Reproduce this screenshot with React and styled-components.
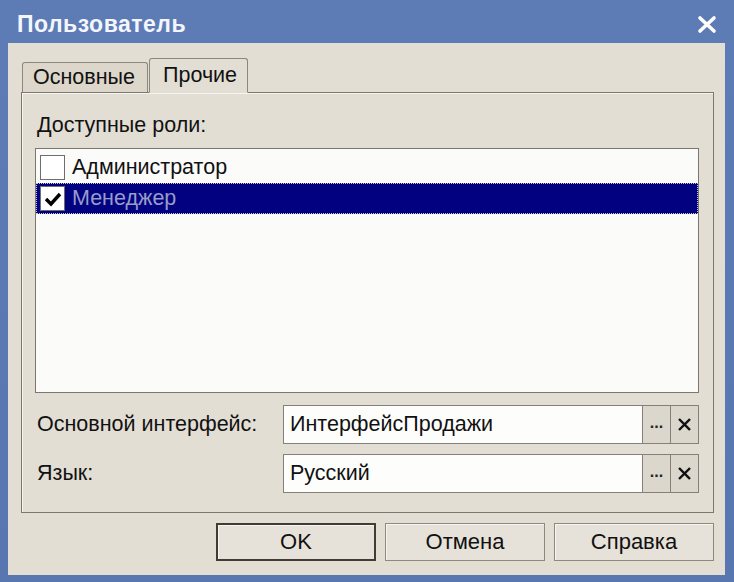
import React from "react";
import styled, { createGlobalStyle } from "styled-components";

const Global = createGlobalStyle`
  html, body { margin: 0; padding: 0; background: #5a79b2; }
  body { font-family: "Liberation Sans", Arial, sans-serif; }
  * { box-sizing: border-box; }
`;

const Window = styled.div`
  width: 734px;
  height: 582px;
  background: linear-gradient(#5d7cb6, #5877b0);
  display: flex;
  flex-direction: column;
  overflow: hidden;
`;

const TitleBar = styled.div`
  height: 43px;
  flex: none;
  display: flex;
  align-items: center;
  justify-content: space-between;
  padding: 6px 17px 0 17px;
`;

const Title = styled.div`
  color: #f4f6fb;
  font-weight: bold;
  font-size: 23px;
  letter-spacing: 0.5px;
`;

const CloseIcon = styled.svg`
  width: 20px;
  height: 19px;
  margin-top: 0px;
`;

const Body = styled.div`
  flex: 1;
  margin: 0 9px 7px 8px;
  background: #e3ded4;
  padding: 15px 11px 0 13px;
  display: flex;
  flex-direction: column;
`;

const TabRow = styled.div`
  display: flex;
  align-items: flex-end;
  height: 35px;
  padding-left: 1px;
  position: relative;
  z-index: 1;
  margin-bottom: -1px;
`;

const Tab = styled.div`
  height: ${(p) => (p.$active ? "35px" : "30px")};
  padding: 0 ${(p) => (p.$active ? "13px" : "10px")};
  width: ${(p) => p.$w}px;
  display: flex;
  align-items: center;
  font-size: 21.5px;
  color: #111;
  background: ${(p) => (p.$active ? "#e3ded4" : "#dcd6cb")};
  border: 1px solid #8b877d;
  border-bottom: ${(p) => (p.$active ? "1px solid #e3ded4" : "none")};
  border-radius: 3px 3px 0 0;
  margin-left: ${(p) => (p.$active ? "1px" : "0")};
  margin-bottom: ${(p) => (p.$active ? "0" : "1px")};
`;

const Panel = styled.div`
  height: 421px;
  border: 1px solid #7c786f;
  box-shadow: inset 1px 1px 0 #f6f4ef;
  padding: 20px 14px 0 13px;
  display: flex;
  flex-direction: column;
`;

const Label = styled.div`
  font-size: 21.5px;
  color: #111;
  height: 24px;
  display: flex;
  align-items: center;
  padding-left: 2px;
  width: ${(p) => (p.$w ? p.$w + "px" : "auto")};
  flex: none;
`;

const ListBox = styled.div`
  margin-top: 11px;
  height: 245px;
  background: #fbfbfa;
  border: 1px solid #7b776e;
  padding-top: 2px;
  display: flex;
  flex-direction: column;
`;

const ListRow = styled.div`
  height: ${(p) => p.$h}px;
  display: flex;
  align-items: center;
  padding-left: 4px;
  gap: 7px;
  font-size: 21.5px;
  background: ${(p) => (p.$selected ? "#020280" : "transparent")};
  color: ${(p) => (p.$selected ? "#979cc9" : "#111")};
  outline: ${(p) => (p.$selected ? "1px dotted #c9c9c9" : "none")};
  outline-offset: -1px;
`;

const CheckBox = styled.div`
  width: 25px;
  height: 25px;
  flex: none;
  background: #fff;
  border: 1px solid #6e6e6e;
  display: flex;
  align-items: center;
  justify-content: center;
`;

const FieldRow = styled.div`
  display: flex;
  align-items: center;
  height: 39px;
  margin-top: ${(p) => p.$mt}px;
`;

const Input = styled.div`
  flex: 1;
  height: 100%;
  background: #fdfdfc;
  border: 1px solid #85817a;
  display: flex;
  align-items: center;
  padding-left: 6px;
  font-size: 21.5px;
  color: #111;
`;

const SmallButton = styled.div`
  width: 28px;
  height: 100%;
  flex: none;
  background: #dcd7cd;
  border: 1px solid #85817a;
  border-left: none;
  display: flex;
  align-items: ${(p) => (p.$dots ? "flex-end" : "center")};
  justify-content: center;
  padding-bottom: ${(p) => (p.$dots ? "11px" : "0")};
  font-size: 16px;
  font-weight: bold;
  color: #222;
`;

const ButtonBar = styled.div`
  display: flex;
  justify-content: flex-end;
  gap: 9px;
  margin-top: 10px;
`;

const Button = styled.div`
  width: 160px;
  height: 38px;
  display: flex;
  align-items: center;
  justify-content: center;
  font-size: 22px;
  color: #111;
  background: #e6e2d9;
  border: ${(p) => (p.$default ? "2px solid #3f3c36" : "1px solid #8d897f")};
  box-shadow: inset 1px 1px 0 #f7f5f0;
`;

const Cross = ({ size = 14, stroke = "#111", width = 3 }) => (
  <svg width={size} height={size} viewBox="0 0 14 14">
    <path d="M2 2 L12 12 M12 2 L2 12" stroke={stroke} strokeWidth={width} strokeLinecap="square" />
  </svg>
);

export default function App() {
  return (
    <>
      <Global />
      <Window>
        <TitleBar>
          <Title>Пользователь</Title>
          <CloseIcon viewBox="0 0 20 19">
            <path d="M3 3 L17 16 M17 3 L3 16" stroke="#ffffff" strokeWidth="3.6" strokeLinecap="round" />
          </CloseIcon>
        </TitleBar>
        <Body>
          <TabRow>
            <Tab $w={126}>Основные</Tab>
            <Tab $active $w={99}>Прочие</Tab>
          </TabRow>
          <Panel>
            <Label>Доступные роли:</Label>
            <ListBox>
              <ListRow $h={32}>
                <CheckBox />
                <span>Администратор</span>
              </ListRow>
              <ListRow $h={31} $selected>
                <CheckBox>
                  <svg width="18" height="16" viewBox="0 0 18 16">
                    <path d="M2 8 L7 13 L16 3" stroke="#000" strokeWidth="3.4" fill="none" />
                  </svg>
                </CheckBox>
                <span>Менеджер</span>
              </ListRow>
            </ListBox>
            <FieldRow $mt={12}>
              <Label $w={248}>Основной интерфейс:</Label>
              <Input>ИнтерфейсПродажи</Input>
              <SmallButton $dots>...</SmallButton>
              <SmallButton>
                <Cross size={13} width={2.6} />
              </SmallButton>
            </FieldRow>
            <FieldRow $mt={10}>
              <Label $w={248}>Язык:</Label>
              <Input>Русский</Input>
              <SmallButton $dots>...</SmallButton>
              <SmallButton>
                <Cross size={13} width={2.6} />
              </SmallButton>
            </FieldRow>
          </Panel>
          <ButtonBar>
            <Button $default>OK</Button>
            <Button>Отмена</Button>
            <Button>Справка</Button>
          </ButtonBar>
        </Body>
      </Window>
    </>
  );
}
